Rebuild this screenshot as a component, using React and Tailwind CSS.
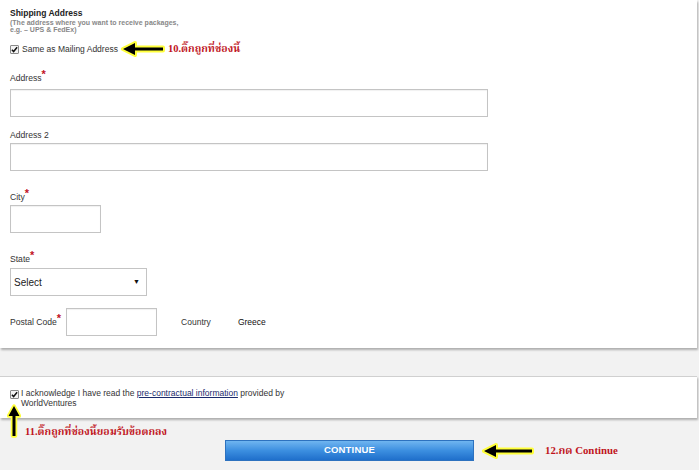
import React from "react";

const thai = "font-['Liberation_Serif','Noto_Serif_Thai','Noto_Sans_Thai',serif]";

// small old-style ticked box
function Tick() {
  return (
    <span className="inline-flex w-[9px] h-[9px] shrink-0 items-center justify-center border border-[#8a8a8a] bg-[#f4f4f4] rounded-[1px]">
      <svg width="7" height="7" viewBox="0 0 8 8">
        <path d="M1 4.2 L3 6.3 L7 1.5" fill="none" stroke="#111" strokeWidth="1.7" />
      </svg>
    </span>
  );
}

// black arrow with a yellow halo, pointing left
function ArrowLeft({ w = 46 }) {
  const shaft = `M${w - 2} 6.5 L14 6.5 L14 2 L2 8 L14 14 L14 9.5 L${w - 2} 9.5 Z`;
  return (
    <svg width={w} height="16" viewBox={`0 0 ${w} 16`} className="shrink-0">
      <path d={shaft} fill="#ffff3a" stroke="#ffff3a" strokeWidth="4" strokeLinejoin="round" />
      <path d={shaft} fill="#000" />
    </svg>
  );
}

function ArrowUp() {
  const p = "M5.5 32 L5.5 12 L1.5 12 L7 2 L12.5 12 L8.5 12 L8.5 32 Z";
  return (
    <svg width="14" height="34" viewBox="0 0 14 34" className="shrink-0">
      <path d={p} fill="#ffff3a" stroke="#ffff3a" strokeWidth="3.5" strokeLinejoin="round" />
      <path d={p} fill="#000" />
    </svg>
  );
}

function Label({ children, req, className = "" }) {
  return (
    <div className={`h-[14px] text-[8.6px] leading-[14px] text-[#333] whitespace-nowrap ${className}`}>
      {children}
      {req && <span className="relative top-[-3px] text-[#c1121f] text-[11px] font-bold leading-none">*</span>}
    </div>
  );
}

function Box({ className }) {
  return <div className={`h-[28px] border border-[#c4c4c4] bg-white shadow-[inset_0_1px_1px_rgba(0,0,0,0.06)] ${className}`} />;
}

export default function App() {
  return (
    <div className="w-[699px] h-[470px] overflow-hidden bg-[#f2f2f2] font-['Liberation_Sans',Arial,sans-serif]">
      {/* shipping address card */}
      <div className="h-[348px] w-[697px] bg-white shadow-[1px_2px_2px_rgba(0,0,0,0.28)] pt-[6px] pl-[10px]">
        <h3 className="text-[8.5px] leading-[14px] font-bold text-[#222]">Shipping Address</h3>
        <p className="mt-[-1px] text-[7px] leading-[7px] font-bold text-[#888]">
          (The address where you want to receive packages,
          <br />
          e.g. – UPS &amp; FedEx)
        </p>

        <div className="mt-[9px] flex items-center h-[14px]">
          <Tick />
          <span className="ml-[3px] text-[8.5px] text-[#333]">Same as Mailing Address</span>
          <span className="ml-[3px] flex"><ArrowLeft w={44} /></span>
          <span className={`ml-[3px] text-[10.5px] font-bold text-[#c0141c] ${thai}`}>10.ติ๊กถูกที่ช่องนี้</span>
        </div>

        <Label req className="mt-[15px]">Address</Label>
        <Box className="mt-[4px] w-[478px]" />

        <Label className="mt-[11px]">Address 2</Label>
        <Box className="mt-[1px] w-[478px]" />

        <Label req className="mt-[19px]">City</Label>
        <Box className="mt-[1px] w-[91px]" />

        <Label req className="mt-[19px]">State</Label>
        <div className="mt-[2px] w-[137px] h-[28px] border border-[#c4c4c4] bg-white flex items-center justify-between pl-[3px] pr-[6px]">
          <span className="text-[10px] text-[#222]">Select</span>
          <span className="text-[7px] text-[#111]">▼</span>
        </div>

        <div className="mt-[12px] flex items-center text-[8.5px] text-[#333]">
          <Label req>Postal Code</Label>
          <Box className="ml-[5px] w-[91px]" />
          <span className="ml-[24px]">Country</span>
          <span className="ml-[27px] text-[#111]">Greece</span>
        </div>
      </div>

      {/* acknowledgement card */}
      <div className="mt-[28px] h-[42px] w-[697px] bg-white border-t border-[#d0d0d0] shadow-[1px_2px_2px_rgba(0,0,0,0.28)] pt-[11px] pl-[10px] flex items-start">
        <div className="flex mt-[2px]"><Tick /></div>
        <p className="ml-[2px] text-[8.5px] leading-[10px] text-[#333]">
          I acknowledge I have read the{" "}
          <span className="underline text-[#1a2a6c]">pre-contractual information</span> provided by
          <br />
          WorldVentures
        </p>
      </div>

      <div className="relative h-[52px]">
        <div className="absolute left-[7px] top-[-14px] flex items-end">
          <ArrowUp />
          <span className={`ml-[4px] mb-[-2px] text-[10.5px] font-bold text-[#c0141c] ${thai}`}>11.ติ๊กถูกที่ช่องนี้ยอมรับข้อตกลง</span>
        </div>
        <div className="absolute left-[225px] top-[22px] flex items-center">
          <button className="w-[249px] h-[21px] bg-gradient-to-b from-[#6fb5f0] via-[#3c8fe0] to-[#1f6fcb] border border-[#2d72bf] text-white text-[9.5px] font-bold tracking-[0.2px]">
            CONTINUE
          </button>
          <span className="ml-[8px] flex"><ArrowLeft w={52} /></span>
          <span className={`ml-[11px] text-[10.8px] font-bold text-[#c0141c] ${thai}`}>12.กด Continue</span>
        </div>
      </div>
    </div>
  );
}
